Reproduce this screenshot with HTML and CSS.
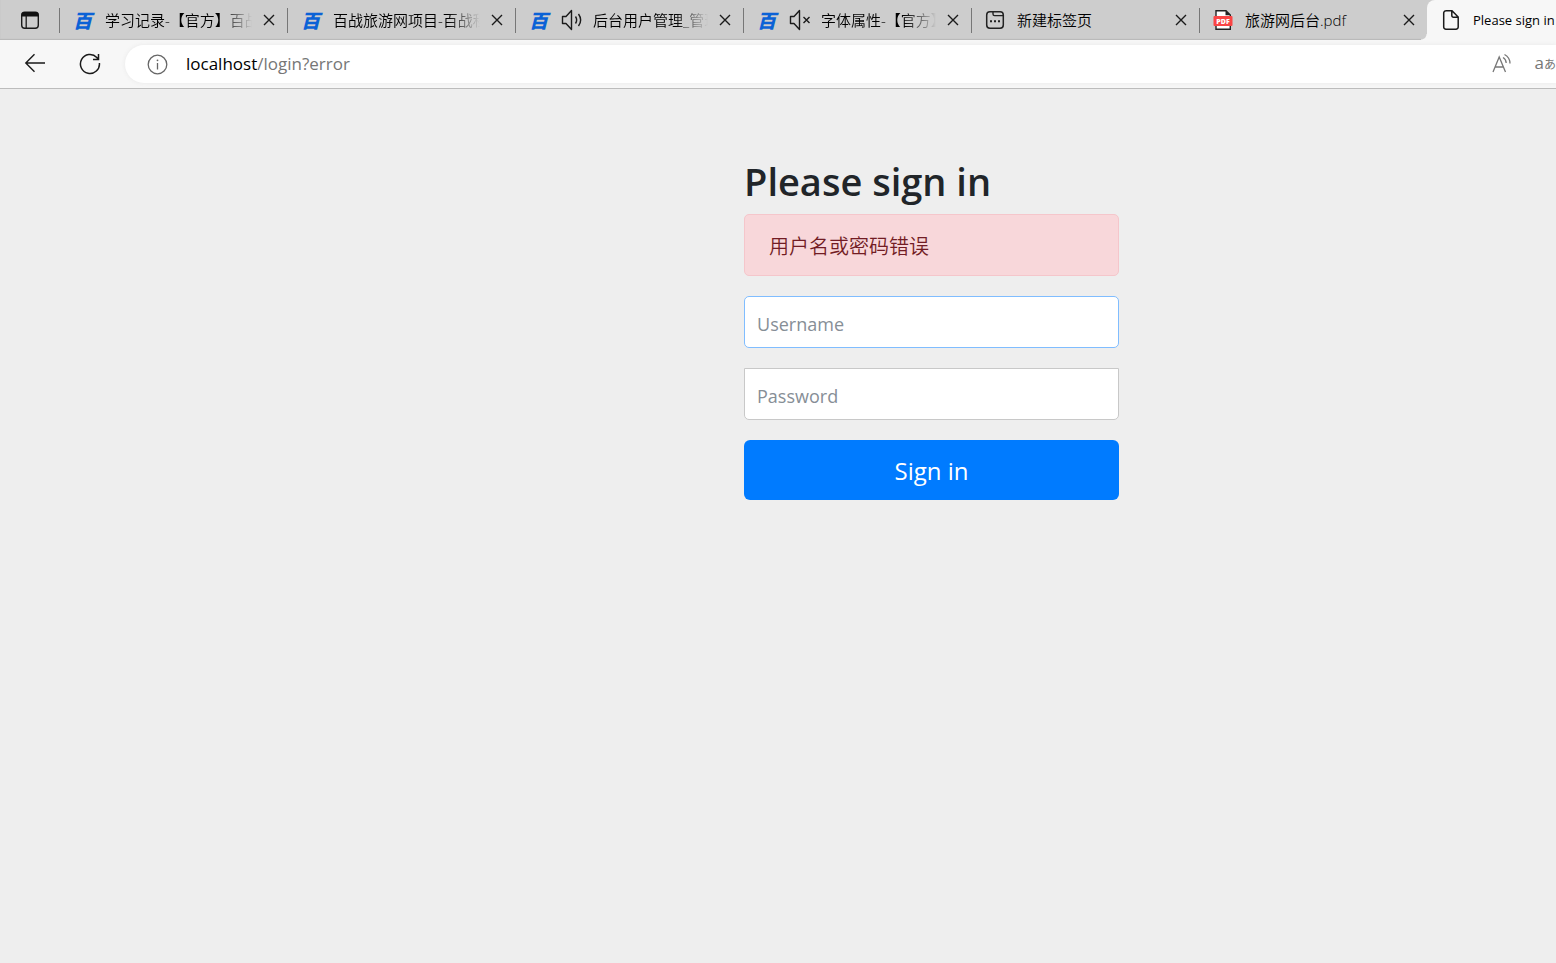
FILE: index.html
```
<!DOCTYPE html>
<html lang="zh-CN">
<head>
  <meta charset="UTF-8">
  <meta name="viewport" content="width=device-width, initial-scale=1.0">
  <title>Please sign in</title>
  <link rel="stylesheet" href="styles.css">
</head>
<body>
  <!-- shared icons -->
  <svg class="defs" width="0" height="0" aria-hidden="true">
    <symbol id="close" viewBox="0 0 12 12">
      <path d="M1 1 L11 11 M11 1 L1 11" fill="none" stroke="#1a1a1a" stroke-width="1.4"/>
    </symbol>
    <symbol id="speaker" viewBox="0 0 22 22">
      <path d="M1.5 7.5 H5 L10.5 1.5 V20.5 L5 14.5 H1.5 Z" fill="none" stroke="#1a1a1a" stroke-width="1.4" stroke-linejoin="round"/>
    </symbol>
  </svg>

  <header class="browser">
    <nav class="tab-strip">
      <button type="button" class="tab-menu" aria-label="Tab actions">
        <svg width="20" height="20" viewBox="0 0 20 20">
          <rect x="1.7" y="2.2" width="16.6" height="16" rx="3" fill="none" stroke="#1a1a1a" stroke-width="1.4"/>
          <path d="M1.5 6.5 V5 a3 3 0 0 1 3-3 H15.5 a3 3 0 0 1 3 3 V6.5 Z" fill="#111"/>
          <path d="M6.2 6 V18" stroke="#1a1a1a" stroke-width="1.3"/>
        </svg>
      </button>
      <div class="tab">
        <span class="logo">百</span>
        <a class="tab-title fade" href="#">学习记录-【官方】百战</a>
        <button type="button" class="tab-close" aria-label="Close"><svg width="12" height="12"><use href="#close"/></svg></button>
      </div>
      <div class="tab">
        <span class="logo">百</span>
        <a class="tab-title fade" href="#">百战旅游网项目-百战程</a>
        <button type="button" class="tab-close" aria-label="Close"><svg width="12" height="12"><use href="#close"/></svg></button>
      </div>
      <div class="tab">
        <span class="logo">百</span>
        <svg class="sound" width="22" height="22" viewBox="0 0 22 22">
          <use href="#speaker"/>
          <path d="M14.5 7.5 Q16.8 11 14.5 14.5 M17.5 5 Q21.8 11 17.5 17" fill="none" stroke="#1a1a1a" stroke-width="1.4"/>
        </svg>
        <a class="tab-title fade" href="#">后台用户管理_管理</a>
        <button type="button" class="tab-close" aria-label="Close"><svg width="12" height="12"><use href="#close"/></svg></button>
      </div>
      <div class="tab">
        <span class="logo">百</span>
        <svg class="sound" width="22" height="22" viewBox="0 0 22 22">
          <use href="#speaker"/>
          <path d="M14.5 8 L20.5 14 M20.5 8 L14.5 14" fill="none" stroke="#1a1a1a" stroke-width="1.4"/>
        </svg>
        <a class="tab-title fade" href="#">字体属性-【官方】</a>
        <button type="button" class="tab-close" aria-label="Close"><svg width="12" height="12"><use href="#close"/></svg></button>
      </div>
      <div class="tab">
        <svg class="tab-icon" width="20" height="20" viewBox="0 0 20 20">
          <rect x="1.7" y="1.7" width="16.6" height="16.6" rx="3.2" fill="none" stroke="#222" stroke-width="1.5"/>
          <path d="M8 2 V4 a1.6 1.6 0 0 0 1.6 1.6 H18" fill="none" stroke="#222" stroke-width="1.4"/>
          <path d="M5 10.2 h2 v2 h-2z M9 10.2 h2 v2 h-2z M13 10.2 h2 v2 h-2z" fill="#222"/>
        </svg>
        <a class="tab-title" href="#">新建标签页</a>
        <button type="button" class="tab-close" aria-label="Close"><svg width="12" height="12"><use href="#close"/></svg></button>
      </div>
      <div class="tab">
        <svg class="tab-icon" width="20" height="20" viewBox="0 0 20 20">
          <path d="M3 .7 H13 L17.3 5 V19.3 H3 Z" fill="#fff" stroke="#222" stroke-width="1.4"/>
          <path d="M12.5 .7 V5.3 H17.5 Z" fill="#222"/>
          <rect x="0.5" y="6" width="19" height="10" rx="1" fill="#fa4545"/>
          <text x="10" y="13.6" class="pdf-text">PDF</text>
        </svg>
        <a class="tab-title" href="#">旅游网后台.pdf</a>
        <button type="button" class="tab-close" aria-label="Close"><svg width="12" height="12"><use href="#close"/></svg></button>
      </div>
      <div class="tab active">
        <svg class="tab-icon" width="20" height="20" viewBox="0 0 20 20">
          <path d="M4.7 .8 H11 L17.2 7 V17 a2.2 2.2 0 0 1 -2.2 2.2 H4.9 a2.2 2.2 0 0 1 -2.2 -2.2 V3 a2.2 2.2 0 0 1 2.2 -2.2 M10.8 1 V5.6 a1.6 1.6 0 0 0 1.6 1.6 H17" fill="none" stroke="#1a1a1a" stroke-width="1.5"/>
        </svg>
        <a class="tab-title" href="#">Please sign in</a>
      </div>
    </nav>

    <div class="toolbar">
      <button type="button" class="tool" aria-label="Back">
        <svg width="22" height="22" viewBox="0 0 22 22">
          <path d="M21 10 H1.8 M10.5 1.3 L1.8 10 L10.5 18.7" fill="none" stroke="#1a1a1a" stroke-width="1.4"/>
        </svg>
      </button>
      <button type="button" class="tool" aria-label="Refresh">
        <svg width="22" height="22" viewBox="0 0 22 22">
          <path d="M20.4 10 A9.5 9.5 0 1 1 17.8 4.4 L19.4 6.3 M19.5 1 V6.4 H14" fill="none" stroke="#1a1a1a" stroke-width="1.5"/>
        </svg>
      </button>
      <div class="address">
        <svg width="21" height="21" viewBox="0 0 21 21">
          <circle cx="10.5" cy="10.5" r="9.3" fill="none" stroke="#666" stroke-width="1.3"/>
          <path d="M10.5 9 V15.5" stroke="#666" stroke-width="1.3"/>
          <circle cx="10.5" cy="6.3" r="0.9" fill="#666"/>
        </svg>
        <span class="url">localhost<span class="path">/login?error</span></span>
        <button type="button" class="read" aria-label="Read aloud">
          <svg width="22" height="22" viewBox="0 0 22 22">
            <path d="M2 19 L8.2 4 L14.5 19 M4.2 14 H12.3 M12 4.5 Q15 6.2 15.2 10 M13.5 1.5 Q19 4.5 19 10.5" fill="none" stroke="#777" stroke-width="1.3"/>
          </svg>
        </button>
        <button type="button" class="translate" aria-label="Translate">a<span class="kana">あ</span></button>
      </div>
    </div>
  </header>

  <main class="page">
    <form class="form-signin" method="post" action="/login">
      <h2>Please sign in</h2>
      <div class="alert" role="alert">用户名或密码错误</div>
      <input type="text" name="username" class="form-control username" placeholder="Username" aria-label="Username" required>
      <input type="password" name="password" class="form-control password" placeholder="Password" aria-label="Password" required>
      <button type="submit" class="btn">Sign in</button>
    </form>
  </main>
</body>
</html>
```

FILE: styles.css
```
* {
  box-sizing: border-box;
}
body {
  margin: 0;
  min-height: 100vh;
  overflow-x: hidden;
  background: #eee;
  color: #212529;
  font-family: "Open Sans", "Noto Sans CJK SC", sans-serif;
}
button {
  padding: 0;
  border: none;
  background: none;
  font-family: inherit;
  cursor: pointer;
}
svg {
  display: block;
  flex-shrink: 0;
}
.defs {
  position: absolute;
}

/* tabs */
.tab-strip {
  display: flex;
  height: 40px;
  overflow: hidden;
  background: #cdcdcd;
  box-shadow: inset 0 -1px 1px #b8b8b8;
}
.tab-menu {
  display: flex;
  flex: 0 0 59px;
  align-items: center;
  justify-content: center;
}
.tab {
  position: relative;
  display: flex;
  flex: 0 0 228px;
  align-items: center;
  min-width: 0;
  padding: 0 10px 0 14px;
}
.tab::before {
  content: "";
  position: absolute;
  left: 0;
  top: 8px;
  width: 1px;
  height: 25px;
  background: #777;
}
.logo {
  flex: 0 0 20px;
  color: #0b62d6;
  font: italic 900 19px/38px "Noto Sans CJK SC", sans-serif;
}
.sound {
  margin-left: 12px;
}
.tab-title {
  flex: 1;
  min-width: 0;
  margin: 0 9px 0 12px;
  overflow: hidden;
  color: #000;
  font-size: 15px;
  font-weight: 350;
  line-height: 38px;
  text-decoration: none;
  white-space: nowrap;
}
.sound + .tab-title {
  margin-left: 10px;
}
.fade {
  mask-image: linear-gradient(to right, #000 calc(100% - 32px), transparent);
}
.tab-close {
  padding: 2px;
}
.pdf-text {
  fill: #fff;
  font-size: 7px;
  font-weight: 800;
  text-anchor: middle;
}
.tab.active {
  flex: 1 0 0;
  padding-right: 0;
  border-radius: 8px 0 0 0;
  background: #f7f7f7;
}
.tab.active::before {
  left: -6px;
  top: auto;
  bottom: 0;
  width: 6px;
  height: 6px;
  background: radial-gradient(circle at 0 0, #cdcdcd 5px, #f7f7f7 6px);
}
.tab.active .tab-title {
  margin-right: 0;
  font-size: 13px;
  font-weight: 400;
}

/* toolbar */
.toolbar {
  display: flex;
  align-items: center;
  height: 49px;
  padding-left: 24px;
  overflow: hidden;
  background: #f7f7f7;
  border-bottom: 1px solid #bcbcbc;
}
.tool {
  margin-right: 33px;
}
.tool + .tool {
  margin-right: 24px;
}
.address {
  display: flex;
  flex: 1;
  align-items: center;
  height: 38px;
  padding-left: 22px;
  border-radius: 19px 0 0 19px;
  background: #fff;
  box-shadow: 0 0 4px #e8e8e8;
}
.url {
  flex: 1;
  margin-left: 18px;
  padding-bottom: 2px;
  color: #000;
  font-size: 17px;
}
.path {
  color: #767676;
}
.read {
  margin-right: 22px;
}
.translate {
  padding-bottom: 2px;
  color: #777;
  font-size: 17px;
  line-height: 24px;
  white-space: nowrap;
}
.kana {
  font-family: "Noto Sans CJK JP", sans-serif;
  font-size: 12px;
}

/* login form */
.page {
  display: grid;
  grid-template-columns: 63fr 375px 37fr;
  padding-top: 68px;
}
.form-signin {
  grid-column: 2;
}
.form-signin h2 {
  margin: 0 0 9px;
  font-size: 38px;
  font-weight: 600;
  line-height: 48px;
  white-space: nowrap;
}
.alert {
  margin-bottom: 20px;
  padding: 17px 24px 13px;
  border: 1px solid #f5c6cb;
  border-radius: 5px;
  background: #f8d7da;
  color: #721c24;
  font-size: 20px;
  font-weight: 350;
  line-height: 30px;
}
.form-control {
  display: block;
  width: 100%;
  height: 52px;
  margin-bottom: 20px;
  padding: 4px 12px 0;
  border: 1px solid #c8c8c8;
  border-radius: 5px;
  outline: none;
  background: #fff;
  font-family: inherit;
  font-size: 18px;
}
.form-control::placeholder {
  color: #868e96;
}
.username {
  border-color: #80bdff;
}
.password {
  border-radius: 0 0 5px 5px;
}
.btn {
  width: 100%;
  height: 60px;
  border-radius: 6px;
  background: #007bff;
  color: #fff;
  font-size: 24px;
}
```
